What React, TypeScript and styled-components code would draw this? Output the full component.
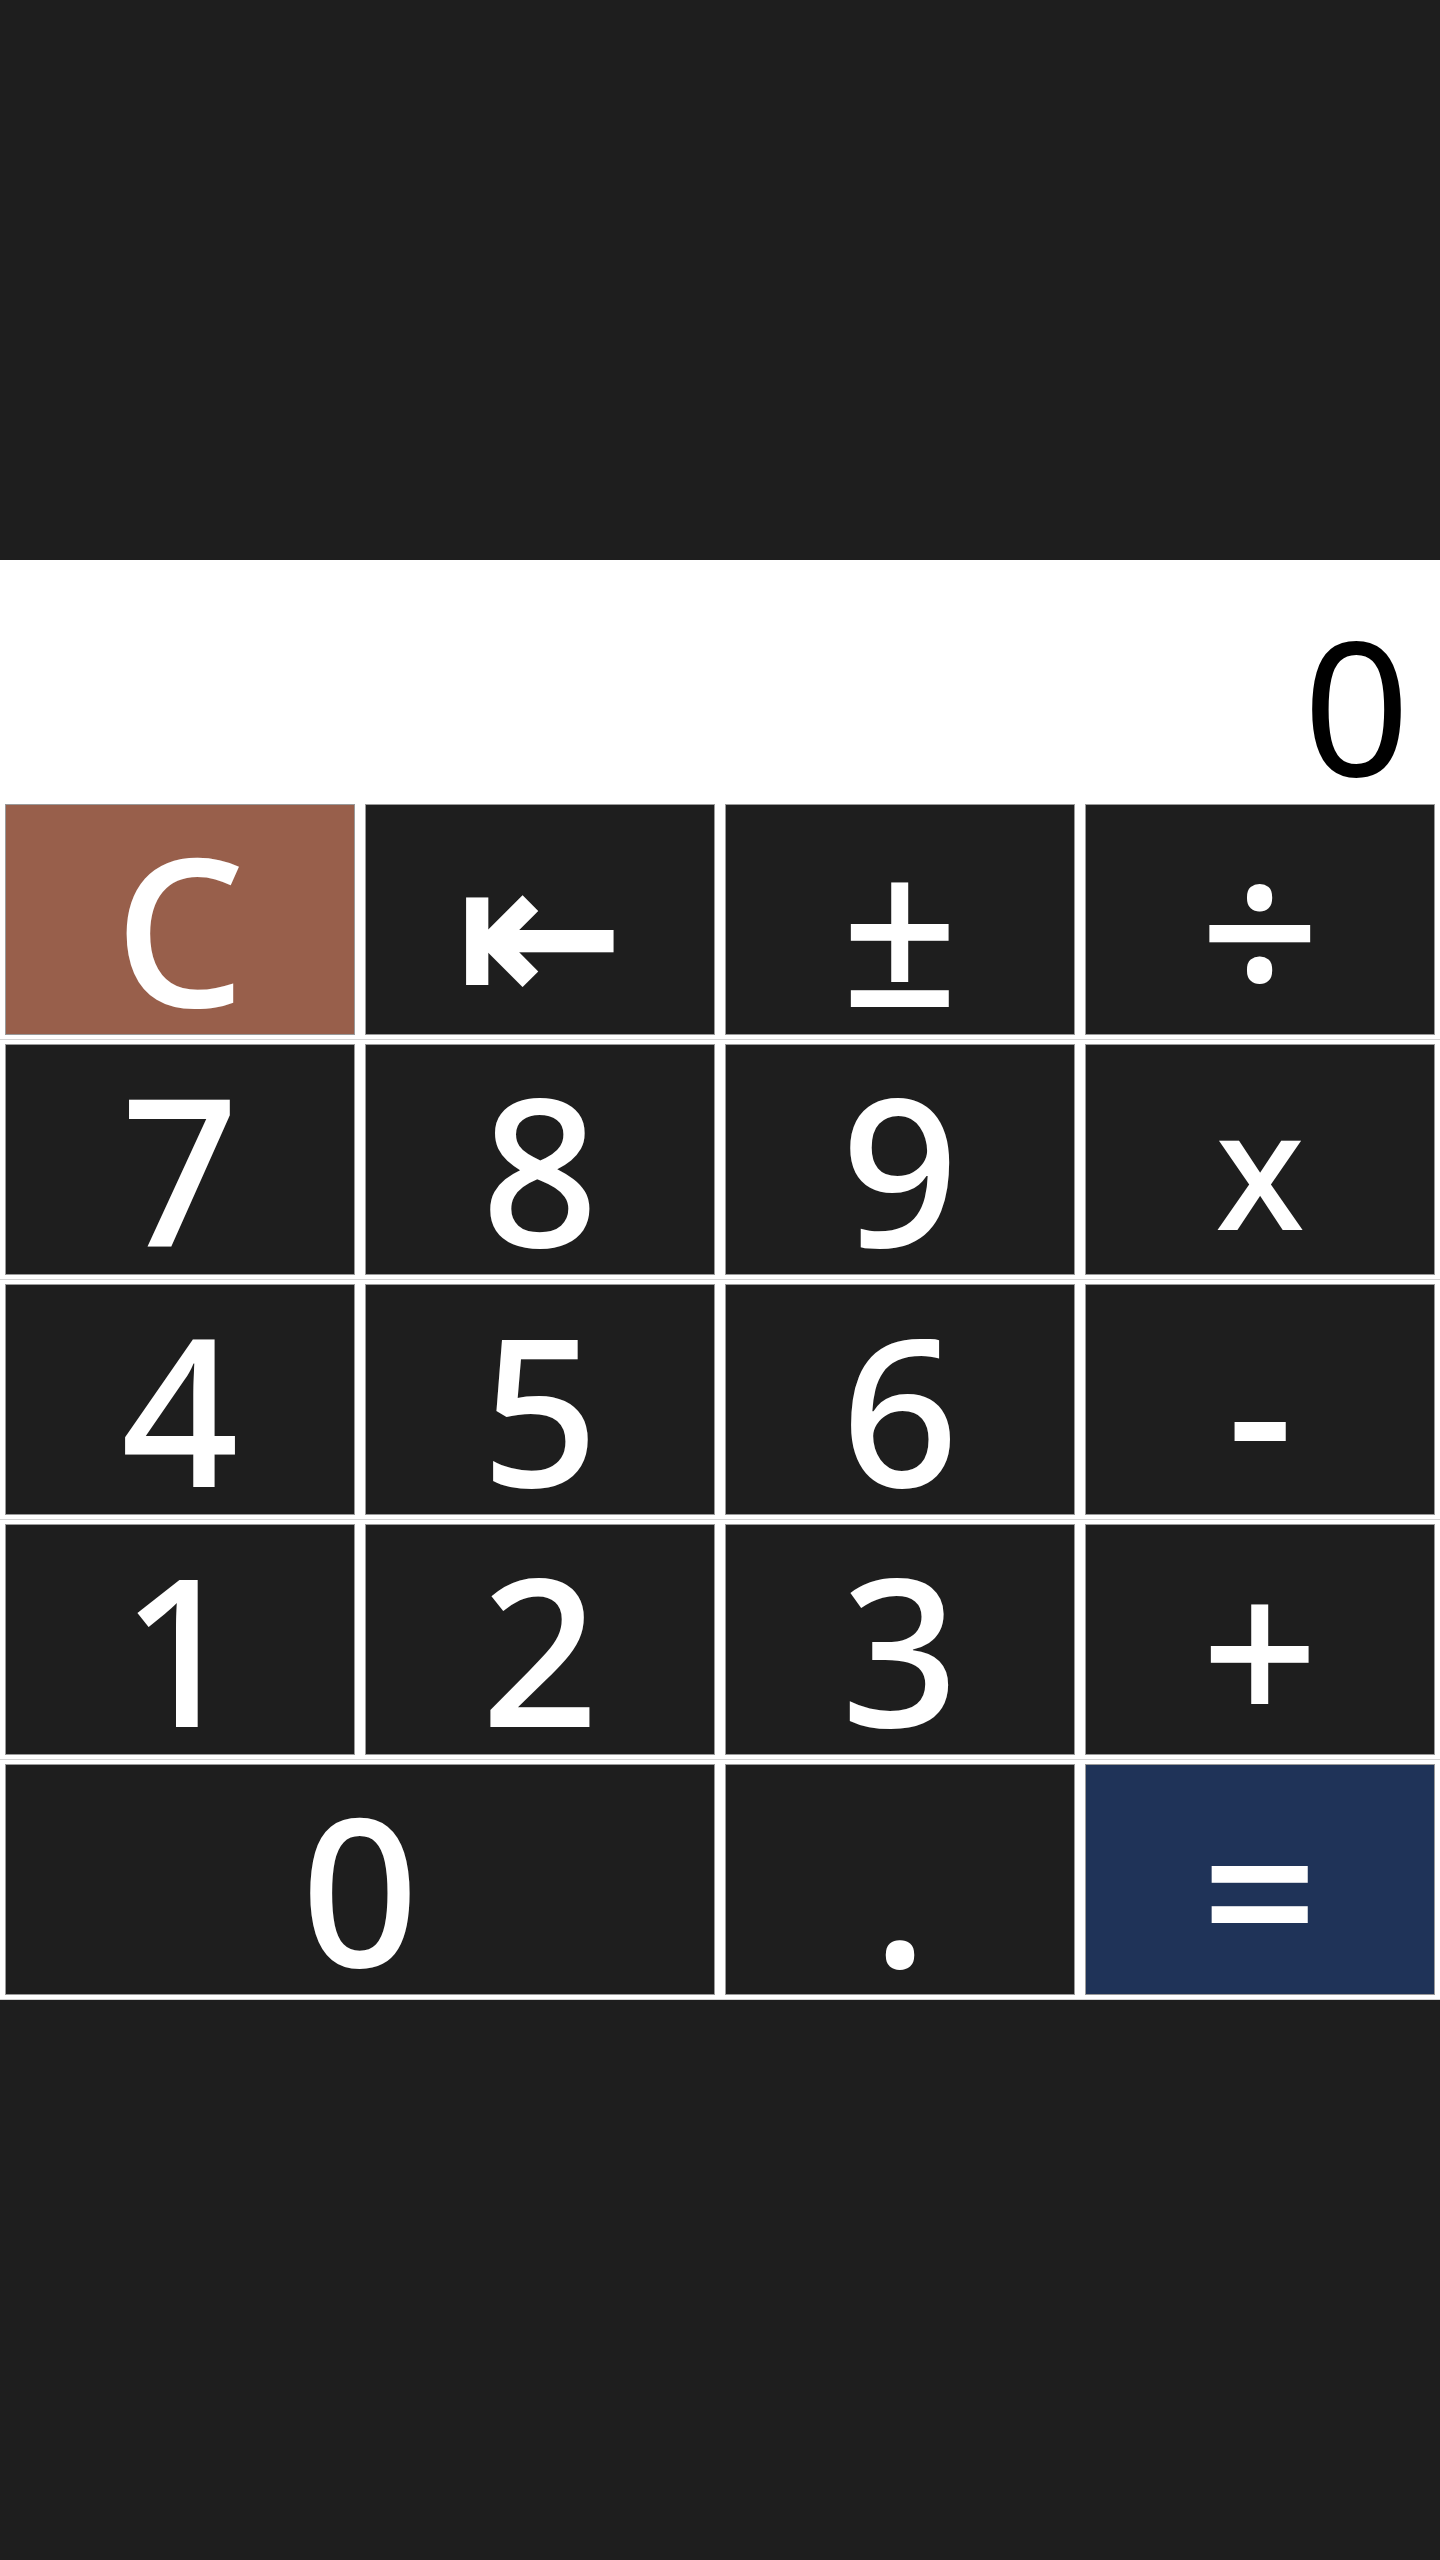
import styled, { createGlobalStyle } from "styled-components";

const GlobalStyle = createGlobalStyle`
  * {
    box-sizing: border-box;
  }
  html, body {
    margin: 0;
    padding: 0;
    background: #1e1e1e;
  }
  body {
    font-family: "Noto Sans", "Noto Sans CJK JP", sans-serif;
  }
`;

const Page = styled.div`
  min-height: 100vh;
  display: flex;
  flex-direction: column;
  justify-content: center;
`;

const Calculator = styled.div`
  width: 100%;
  background: #ffffff;
`;

const Display = styled.div`
  height: 240px;
  display: flex;
  justify-content: flex-end;
  align-items: center;
  padding: 46px 30px 0 0;
  font-size: 187px;
  font-weight: 400;
  line-height: 1;
  color: #000000;
  background: #ffffff;
`;

const Row = styled.div`
  display: grid;
  grid-template-columns: repeat(4, 1fr);
  column-gap: 10px;
  padding: 4px 5px;
  border-bottom: 1px solid #d4d4d4;
  background: #ffffff;
`;

type Tone = "dark" | "clear" | "equals";

const tones: Record<Tone, string> = {
  dark: "#1e1e1e",
  clear: "#985f4b",
  equals: "#1f3358",
};

const Key = styled.button<{ $tone?: Tone; $span?: number; $size?: number; $weight?: number }>`
  grid-column: span ${(p) => p.$span ?? 1};
  height: 231px;
  margin: 0;
  padding: 14px 0 0;
  display: flex;
  justify-content: center;
  align-items: center;
  border: 1px solid #9a9a9a;
  border-radius: 0;
  background: ${(p) => tones[p.$tone ?? "dark"]};
  color: #ffffff;
  font-family: "Noto Sans", "Noto Sans CJK JP", sans-serif;
  font-size: ${(p) => p.$size ?? 206}px;
  font-weight: ${(p) => p.$weight ?? 500};
  line-height: 1;
  cursor: pointer;
`;

interface IKey {
  label: string;
  tone?: Tone;
  span?: number;
  size?: number;
  weight?: number;
}

const rows: IKey[][] = [
  [
    { label: "C", tone: "clear" },
    { label: "⇤", weight: 700, size: 194 },
    { label: "±" },
    { label: "÷", size: 212 },
  ],
  [{ label: "7" }, { label: "8" }, { label: "9" }, { label: "x", size: 165 }],
  [{ label: "4" }, { label: "5" }, { label: "6" }, { label: "-" }],
  [{ label: "1" }, { label: "2" }, { label: "3" }, { label: "+" }],
  [{ label: "0", span: 2 }, { label: "." }, { label: "=", tone: "equals" }],
];

function App() {
  return (
    <>
      <GlobalStyle />
      <Page>
        <Calculator>
          <Display>0</Display>
          {rows.map((row, i) => (
            <Row key={i}>
              {row.map((k) => (
                <Key
                  key={k.label}
                  $tone={k.tone}
                  $span={k.span}
                  $size={k.size}
                  $weight={k.weight}
                >
                  {k.label}
                </Key>
              ))}
            </Row>
          ))}
        </Calculator>
      </Page>
    </>
  );
}

export default App;
